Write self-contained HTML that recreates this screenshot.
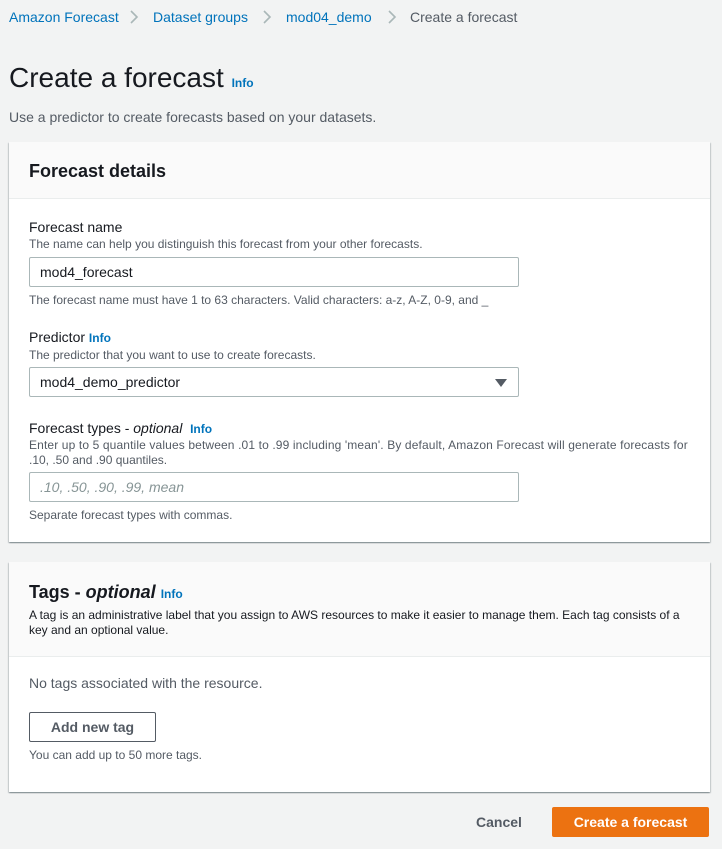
<!DOCTYPE html>
<html><head><meta charset="utf-8"><style>
*{margin:0;padding:0;box-sizing:border-box}
body{width:722px;height:849px;background:#f2f3f3;font-family:"Liberation Sans",sans-serif;color:#16191f;position:relative;overflow:hidden}
.a{position:absolute;white-space:nowrap}
.link{color:#0073bb}
.info{color:#0073bb;font-weight:bold;font-size:12px}
.panel{position:absolute;left:9px;width:701px;background:#fff;box-shadow:0 1px 1px rgba(0,28,36,.3),1px 1px 1px rgba(0,28,36,.15),-1px 1px 1px rgba(0,28,36,.15)}
.hd{background:#fafafa;border-bottom:1px solid #eaeded}
.inp{position:absolute;left:29px;width:490px;height:30px;border:1px solid #aab7b8;border-radius:2px;background:#fff;font-size:14px;padding:6px 10px}
.lbl{font-size:14px}
.desc{font-size:12px;color:#545b64}
svg.ch{position:absolute;top:10px}
</style></head><body>
<div class="a link" style="left:9px;top:9px;font-size:14px">Amazon Forecast</div>
<svg class="ch" style="left:129px" width="10" height="14"><path d="M2 1l6 6-6 6" fill="none" stroke="#aab7b8" stroke-width="1.6"/></svg>
<div class="a link" style="left:153px;top:9px;font-size:14px">Dataset groups</div>
<svg class="ch" style="left:262px" width="10" height="14"><path d="M2 1l6 6-6 6" fill="none" stroke="#aab7b8" stroke-width="1.6"/></svg>
<div class="a link" style="left:286px;top:9px;font-size:14px">mod04_demo</div>
<svg class="ch" style="left:387px" width="10" height="14"><path d="M2 1l6 6-6 6" fill="none" stroke="#aab7b8" stroke-width="1.6"/></svg>
<div class="a" style="left:410px;top:9px;font-size:14px;color:#545b64">Create a forecast</div>

<div class="a" style="left:9px;top:62px;font-size:28px">Create a forecast <span class="info">Info</span></div>
<div class="a" style="left:9px;top:109px;font-size:14px;color:#545b64">Use a predictor to create forecasts based on your datasets.</div>

<div class="panel" style="top:142px;height:400px">
 <div class="hd" style="height:57px"></div>
</div>
<div class="a" style="left:29px;top:161px;font-size:18px;font-weight:bold">Forecast details</div>

<div class="a lbl" style="left:29px;top:219px">Forecast name</div>
<div class="a desc" style="left:29px;top:237px">The name can help you distinguish this forecast from your other forecasts.</div>
<div class="inp" style="top:257px">mod4_forecast</div>
<div class="a desc" style="left:29px;top:293px">The forecast name must have 1 to 63 characters. Valid characters: a-z, A-Z, 0-9, and _</div>

<div class="a lbl" style="left:29px;top:329px">Predictor <span class="info">Info</span></div>
<div class="a desc" style="left:29px;top:348px">The predictor that you want to use to create forecasts.</div>
<div class="inp" style="top:367px">mod4_demo_predictor<span style="position:absolute;right:11px;top:11px;width:0;height:0;border-left:6px solid transparent;border-right:6px solid transparent;border-top:8px solid #545b64"></span></div>

<div class="a lbl" style="left:29px;top:420px">Forecast types - <i>optional</i> &nbsp;<span class="info">Info</span></div>
<div class="a desc" style="left:29px;top:438px;letter-spacing:.13px">Enter up to 5 quantile values between .01 to .99 including 'mean'. By default, Amazon Forecast will generate forecasts for</div>
<div class="a desc" style="left:29px;top:453px">.10, .50 and .90 quantiles.</div>
<div class="inp" style="top:472px;color:#879596;font-style:italic">.10, .50, .90, .99, mean</div>
<div class="a desc" style="left:29px;top:508px">Separate forecast types with commas.</div>

<div class="panel" style="top:562px;height:230px">
 <div class="hd" style="height:95px"></div>
</div>
<div class="a" style="left:29px;top:582px;font-size:18px;font-weight:bold">Tags - <i>optional</i> <span class="info">Info</span></div>
<div class="a desc" style="left:29px;top:608px;color:#16191f">A tag is an administrative label that you assign to AWS resources to make it easier to manage them. Each tag consists of a</div>
<div class="a desc" style="left:29px;top:623px;color:#16191f">key and an optional value.</div>
<div class="a" style="left:29px;top:675px;font-size:14px;color:#545b64">No tags associated with the resource.</div>
<div class="a" style="left:29px;top:712px;width:127px;height:30px;border:1px solid #545b64;border-radius:2px;font-size:14px;font-weight:bold;color:#545b64;text-align:center;line-height:28px">Add new tag</div>
<div class="a desc" style="left:29px;top:748px">You can add up to 50 more tags.</div>

<div class="a" style="left:476px;top:814px;font-size:14px;font-weight:bold;color:#545b64">Cancel</div>
<div class="a" style="left:552px;top:807px;width:157px;height:30px;background:#ec7211;border-radius:2px;color:#fff;font-size:14px;font-weight:bold;text-align:center;line-height:30px">Create a forecast</div>
</body></html>
